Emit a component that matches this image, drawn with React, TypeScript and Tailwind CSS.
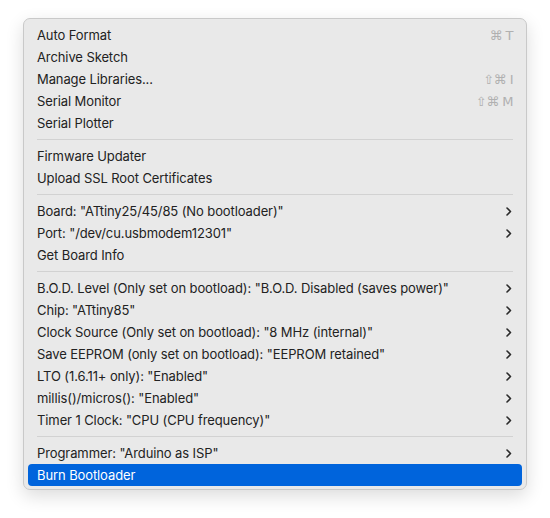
import React from 'react';

type Item =
  | { kind: 'sep' }
  | { kind: 'item'; label: string; shortcut?: string; submenu?: boolean; active?: boolean };

const items: Item[] = [
  { kind: 'item', label: 'Auto Format', shortcut: '⌘ T' },
  { kind: 'item', label: 'Archive Sketch' },
  { kind: 'item', label: 'Manage Libraries...', shortcut: '⇧⌘ I' },
  { kind: 'item', label: 'Serial Monitor', shortcut: '⇧⌘ M' },
  { kind: 'item', label: 'Serial Plotter' },
  { kind: 'sep' },
  { kind: 'item', label: 'Firmware Updater' },
  { kind: 'item', label: 'Upload SSL Root Certificates' },
  { kind: 'sep' },
  { kind: 'item', label: 'Board: "ATtiny25/45/85 (No bootloader)"', submenu: true },
  { kind: 'item', label: 'Port: "/dev/cu.usbmodem12301"', submenu: true },
  { kind: 'item', label: 'Get Board Info' },
  { kind: 'sep' },
  { kind: 'item', label: 'B.O.D. Level (Only set on bootload): "B.O.D. Disabled (saves power)"', submenu: true },
  { kind: 'item', label: 'Chip: "ATtiny85"', submenu: true },
  { kind: 'item', label: 'Clock Source (Only set on bootload): "8 MHz (internal)"', submenu: true },
  { kind: 'item', label: 'Save EEPROM (only set on bootload): "EEPROM retained"', submenu: true },
  { kind: 'item', label: 'LTO (1.6.11+ only): "Enabled"', submenu: true },
  { kind: 'item', label: 'millis()/micros(): "Enabled"', submenu: true },
  { kind: 'item', label: 'Timer 1 Clock: "CPU (CPU frequency)"', submenu: true },
  { kind: 'sep' },
  { kind: 'item', label: 'Programmer: "Arduino as ISP"', submenu: true },
  { kind: 'item', label: 'Burn Bootloader', active: true },
];

function Chevron() {
  return (
    <svg width="6" height="9" viewBox="0 0 6 9" fill="none" className="mr-[1px]">
      <path d="M1 1l3.5 3.5L1 8" stroke="#2a2a2a" strokeWidth="1.6" strokeLinecap="round" strokeLinejoin="round" />
    </svg>
  );
}

export default function App() {
  return (
    <div className="min-h-[518px] w-[550px] bg-white pl-[23px] pt-[18px] font-['Inter','Liberation_Sans',sans-serif]">
      {/* Menu panel */}
      <div className="w-[504px] rounded-[7px] border border-[#c9c9c9] bg-[#e9e9e9] px-[4px] pt-[5px] pb-[3px] shadow-[0_6px_18px_rgba(0,0,0,0.14)]">
        {items.map((it, i) =>
          it.kind === 'sep' ? (
            <div key={i} className="flex h-[11px] items-center px-[9px]">
              <div className="h-px w-full bg-[#d2d2d2]" />
            </div>
          ) : (
            <div
              key={i}
              className={
                it.active
                  ? 'flex h-[22px] items-center justify-between rounded-[4px] bg-[#0064dc] px-[9px] text-[13px] text-white'
                  : 'flex h-[22px] items-center justify-between rounded-[4px] px-[9px] text-[13px] text-[#222222]'
              }
            >
              <span className="translate-y-[1px] whitespace-nowrap tracking-[-0.1px]">{it.label}</span>
              {it.shortcut && (
                <span className="translate-y-[1px] font-['DejaVu_Sans','Inter',sans-serif] text-[13px] tracking-[-0.5px] text-[#b0b0b0]">
                  {it.shortcut}
                </span>
              )}
              {it.submenu && <Chevron />}
            </div>
          )
        )}
      </div>
    </div>
  );
}
